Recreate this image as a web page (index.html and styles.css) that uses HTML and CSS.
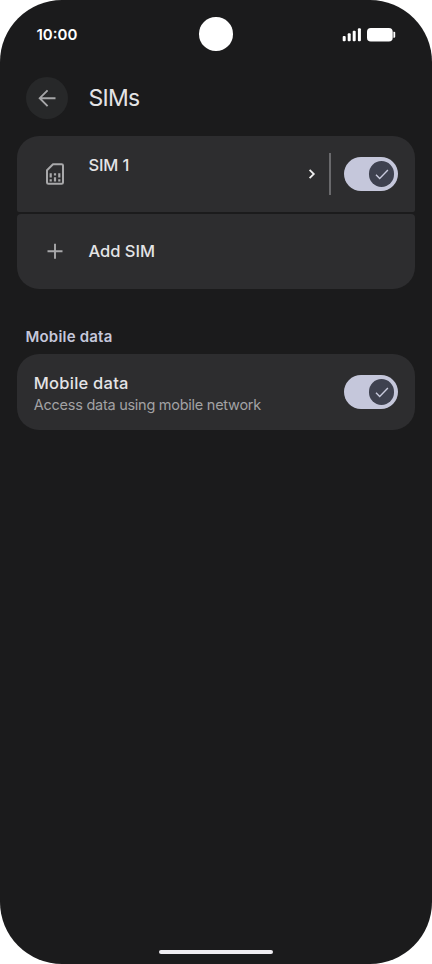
FILE: index.html
```html
<!DOCTYPE html>
<html lang="en">
<head>
<meta charset="utf-8">
<title>SIMs</title>
<link rel="stylesheet" href="styles.css">
</head>
<body>
<div class="phone">
  <div class="status">
    <span class="time">10:00</span>
    <span class="camera"></span>
    <svg class="indicators" width="54" height="16" viewBox="0 0 54 16" fill="#fff">
      <rect x="0.7" y="9" width="3" height="5.3" rx="1"/>
      <rect x="5.7" y="6.2" width="3" height="8.1" rx="1"/>
      <rect x="10.7" y="3.7" width="3" height="10.6" rx="1"/>
      <rect x="15.9" y="1.3" width="3" height="13" rx="1"/>
      <rect x="25" y="1" width="25.7" height="13.6" rx="3.8"/>
      <path d="M51.4 4.8h.8q1 0 1 1v4q0 1-1 1h-.8z"/>
    </svg>
  </div>
  <header class="header">
    <button class="back" aria-label="Back">
      <svg width="42" height="42" viewBox="0 0 42 42" fill="none" stroke="#a5a5a7" stroke-width="1.9"><path d="M29.5 21.2H14.2M21.6 13.3l-7.9 7.9 7.9 7.9"/></svg>
    </button>
    <h1 class="title">SIMs</h1>
  </header>
  <main>
    <section class="group">
      <div class="row first">
        <svg class="icon" width="24" height="24" viewBox="0 0 24 24">
          <path d="M10 2.2H18.6Q20 2.2 20 3.6V20.4Q20 21.8 18.6 21.8H5.4Q4 21.8 4 20.4V8.2z" fill="none" stroke="#a8a8aa" stroke-width="2" stroke-linejoin="round"/>
          <path d="M6.6 11.2h2.2v4.2h-2.2zM6.6 17.2h2.2v2.2h-2.2zM10.9 11.2h2.2v2.2h-2.2zM10.9 15.2h2.2v4.2h-2.2zM15.2 11.2h2.2v4.2h-2.2zM15.2 17.2h2.2v2.2h-2.2z" fill="#a8a8aa"/>
        </svg>
        <span class="label sim">SIM 1</span>
        <svg class="chevron" width="8" height="12" viewBox="0 0 8 12" fill="none" stroke="#eee" stroke-width="1.8"><path d="M1.6 1.8L5.8 6 1.6 10.2"/></svg>
        <span class="divider"></span>
        <span class="switch"><span class="thumb"><svg width="26" height="26" viewBox="0 0 26 26" fill="none" stroke="#c8cadd" stroke-width="1.4"><path d="M7 13.7l3.7 3.7 8.2-8.3"/></svg></span></span>
      </div>
      <div class="row last">
        <svg class="icon" width="24" height="24" viewBox="0 0 24 24" stroke="#a8a8aa" stroke-width="1.9"><path d="M12 4.8v15M4.5 12.3h15"/></svg>
        <span class="label add">Add SIM</span>
      </div>
    </section>
    <h2 class="section-title">Mobile data</h2>
    <section class="card">
      <div class="texts">
        <span class="label mobile">Mobile data</span>
        <span class="sub">Access data using mobile network</span>
      </div>
      <span class="switch"><span class="thumb"><svg width="26" height="26" viewBox="0 0 26 26" fill="none" stroke="#c8cadd" stroke-width="1.4"><path d="M7 13.7l3.7 3.7 8.2-8.3"/></svg></span></span>
    </section>
  </main>
  <div class="home"></div>
</div>
</body>
</html>
```
FILE: styles.css
```css
* { box-sizing: border-box; }
body { margin: 0; background: #fff; font-family: Inter, "Liberation Sans", sans-serif; }
.phone {
  width: 432px; height: 964px; border-radius: 62px; background: #1b1b1c;
  display: flex; flex-direction: column; overflow: hidden;
}
.status {
  height: 77px; padding: 17px 36px 0 36.5px;
  display: grid; grid-template-columns: 1fr 33.6px 1fr; align-items: start;
}
.time { font-size: 15px; line-height: 35px; font-weight: 600; color: #fff; }
.camera { width: 33.6px; height: 33.6px; border-radius: 50%; background: #fff; }
.indicators { justify-self: end; margin-top: 10px; }
.header { height: 59px; padding-left: 25.5px; display: flex; align-items: flex-start; }
.back { width: 42px; height: 42px; padding: 0; border: 0; border-radius: 50%; background: #272829; }
.back svg { display: block; }
.title { margin: 0 0 0 21px; font-size: 23px; line-height: 42px; font-weight: 400; letter-spacing: -0.75px; color: #e4e4e6; }
main { padding: 0 17px; }
.group { display: flex; flex-direction: column; gap: 2px; }
.row { height: 75.5px; padding: 0 16.8px 0 25.5px; display: flex; align-items: center; background: #2d2d2f; }
.first { border-radius: 22px 22px 2px 2px; }
.last { border-radius: 4px 4px 22px 22px; }
.icon { flex: none; margin-right: 22px; }
.label { font-size: 16.5px; line-height: 22px; font-weight: 500; color: #e4e4e6; }
.sim { flex: 1; margin-bottom: 18.5px; letter-spacing: -0.15px; }
.mobile { letter-spacing: 0.24px; }
.chevron { margin-right: 13.3px; }
.divider { width: 1.4px; height: 42px; background: #69696c; margin-right: 13px; }
.switch {
  flex: none; width: 54.6px; height: 34px; border-radius: 17px; background: #c5c7db;
  padding: 0 4.2px; display: flex; align-items: center; justify-content: flex-end;
}
.thumb { width: 25.5px; height: 25.5px; border-radius: 50%; background: #3e414f; }
.thumb svg { display: block; }
.section-title { margin: 38px 0 7px 8.5px; font-size: 15px; line-height: 20px; font-weight: 600; letter-spacing: 0.2px; color: #c5c7db; }
.card {
  height: 76px; padding: 0 16.8px; border-radius: 22px; background: #2d2d2f;
  display: flex; align-items: center; justify-content: space-between;
}
.texts { display: flex; flex-direction: column; padding-top: 2px; }
.sub { font-size: 14.5px; line-height: 21px; letter-spacing: -0.26px; color: #a2a2a4; white-space: nowrap; }
.home { width: 114px; height: 4.5px; border-radius: 2px; background: #efedf1; margin: auto auto 10px; }
```
